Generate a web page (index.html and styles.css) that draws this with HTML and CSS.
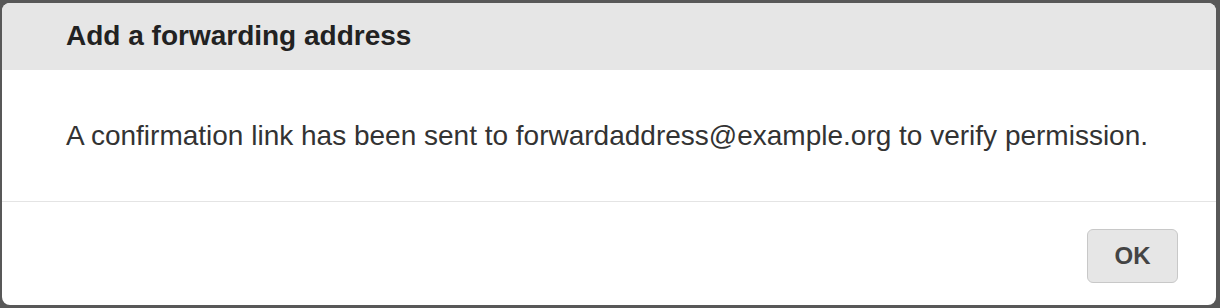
FILE: index.html
```html
<!DOCTYPE html>
<html>
<head>
<meta charset="utf-8">
<link rel="stylesheet" href="styles.css">
</head>
<body>
<div class="dialog">
  <div class="dialog-header">
    <h1 class="dialog-title">Add a forwarding address</h1>
  </div>
  <div class="dialog-body">
    <p class="dialog-text">A confirmation link has been sent to forwardaddress@example.org to verify permission.</p>
  </div>
  <div class="dialog-footer">
    <button class="btn">OK</button>
  </div>
</div>
</body>
</html>
```
FILE: styles.css
```css
html, body {
  margin: 0;
  padding: 0;
  background: #585858;
  height: 308px;
  overflow: hidden;
}
body {
  padding: 3px 4px 3px 2px;
  box-sizing: border-box;
  font-family: "Liberation Sans", Arial, Helvetica, sans-serif;
}
.dialog {
  background: #ffffff;
  border-radius: 8px;
  overflow: hidden;
  height: 302px;
  display: flex;
  flex-direction: column;
}
.dialog-header {
  background: #e6e6e6;
  height: 67px;
  display: flex;
  align-items: center;
  padding-left: 64px;
  flex: none;
}
.dialog-title {
  margin: 0;
  font-size: 28px;
  font-weight: bold;
  color: #222222;
  line-height: 1;
  margin-bottom: 1px;
}
.dialog-body {
  height: 131px;
  border-bottom: 1px solid #e4e4e4;
  display: flex;
  align-items: center;
  padding-left: 64px;
  flex: none;
}
.dialog-text {
  margin: 0;
  font-size: 28px;
  color: #333333;
  line-height: 1;
}
.dialog-footer {
  flex: 1;
  display: flex;
  align-items: center;
  justify-content: flex-end;
  padding-right: 38px;
}
.btn {
  width: 91px;
  height: 54px;
  background: #e6e6e6;
  border: 1.5px solid #c8c8c8;
  border-radius: 6px;
  font-family: "Liberation Sans", Arial, Helvetica, sans-serif;
  font-size: 24px;
  font-weight: bold;
  color: #444444;
  padding: 0;
  margin-top: 4px;
}
```
